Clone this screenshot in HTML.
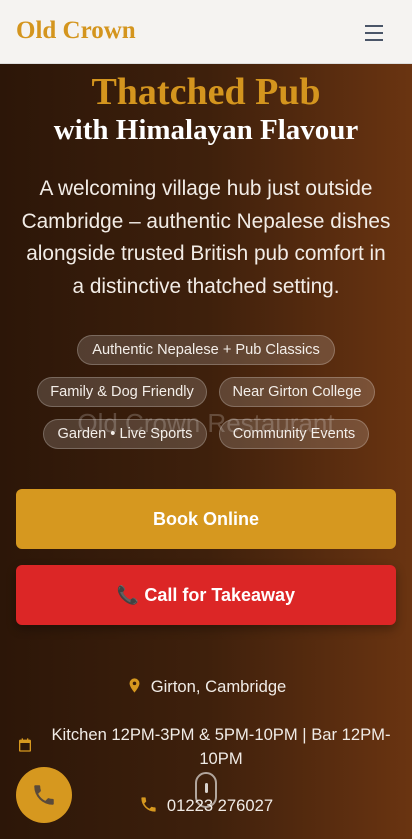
<!DOCTYPE html><html><head><meta charset="utf-8"><style>
*{margin:0;padding:0;box-sizing:border-box}
body{width:412px;height:839px;overflow:hidden;font-family:"Liberation Sans",sans-serif;background:linear-gradient(90deg,#2c1608 0%,#3e200c 50%,#6a3411 100%);position:relative;color:#fff}
.hdr{position:absolute;top:0;left:0;width:412px;height:64px;background:#f5f3f1;border-bottom:1px solid #ddd}
.logo{position:absolute;left:16px;top:17px;font-family:"Liberation Serif",serif;font-weight:bold;font-size:25px;color:#d4951e}
.burger{position:absolute;left:365px;top:25px;width:18px}
.burger i{display:block;height:2px;background:#4a5568;margin-bottom:5px}
.t1{position:absolute;top:70px;width:100%;text-align:center;font-family:"Liberation Serif",serif;font-weight:bold;font-size:38px;color:#d4951e}
.t2{position:absolute;top:114px;width:100%;text-align:center;font-family:"Liberation Serif",serif;font-weight:bold;font-size:29px;color:#fff}
.p{position:absolute;top:173px;left:8px;width:396px;text-align:center;font-size:20.8px;line-height:32.5px;color:#f2ece6}
.tag{position:absolute;height:30px;border-radius:15px;background:rgba(255,255,255,.16);border:1px solid rgba(255,255,255,.22);font-size:14.6px;line-height:28px;text-align:center;color:#f3eee9;white-space:nowrap}
.ghost{position:absolute;top:408px;width:100%;text-align:center;font-size:26px;color:rgba(255,255,255,.2)}
.btn{position:absolute;left:16px;width:380px;height:60px;border-radius:6px;font-weight:bold;font-size:18px;text-align:center;line-height:60px;color:#fff}
.info{position:absolute;width:100%;text-align:center;font-size:16.6px;color:#f0ebe6}
.fab{position:absolute;left:16px;top:767px;width:56px;height:56px;border-radius:50%;background:#d6981f}
</style></head><body>
<div class="hdr"><div class="logo">Old Crown</div><div class="burger"><i></i><i></i><i></i></div></div>
<div class="t1">Thatched Pub</div>
<div class="t2">with Himalayan Flavour</div>
<div class="p">A welcoming village hub just outside<br>Cambridge – authentic Nepalese dishes<br>alongside trusted British pub comfort in<br>a distinctive thatched setting.</div>
<div class="ghost">Old Crown Restaurant</div>
<div class="tag" style="left:77px;top:335px;width:258px">Authentic Nepalese + Pub Classics</div>
<div class="tag" style="left:37px;top:377px;width:170px">Family &amp; Dog Friendly</div>
<div class="tag" style="left:219px;top:377px;width:156px">Near Girton College</div>
<div class="tag" style="left:43px;top:419px;width:164px">Garden • Live Sports</div>
<div class="tag" style="left:219px;top:419px;width:150px">Community Events</div>
<div class="btn" style="top:489px;background:#d6981f">Book Online</div>
<div class="btn" style="top:565px;background:#dc2626;box-shadow:0 4px 10px rgba(0,0,0,.3)">📞 Call for Takeaway</div>
<div class="info" style="top:676px"><svg width="17" height="19" viewBox="0 0 24 24" style="vertical-align:-3px;margin-right:8px"><path fill="#d6981f" d="M12 2a7 7 0 0 0-7 7c0 5 7 13 7 13s7-8 7-13a7 7 0 0 0-7-7zm0 9.5a2.5 2.5 0 1 1 0-5 2.5 2.5 0 0 1 0 5z"/></svg>Girton, Cambridge</div>
<svg width="16" height="16" viewBox="0 0 24 24" style="position:absolute;left:17px;top:737px"><path fill="#d6981f" d="M7 2v2H5a2 2 0 0 0-2 2v14a2 2 0 0 0 2 2h14a2 2 0 0 0 2-2V6a2 2 0 0 0-2-2h-2V2h-2v2H9V2zM5 9h14v11H5z"/></svg>
<div class="info" style="top:723px;left:44px;width:354px;line-height:24px">Kitchen 12PM-3PM &amp; 5PM-10PM | Bar 12PM-10PM</div>
<div class="info" style="top:795px"><svg width="19" height="19" viewBox="0 0 24 24" style="vertical-align:-3px;margin-right:9px"><path fill="#d6981f" d="M6.6 10.8a15 15 0 0 0 6.6 6.6l2.2-2.2c.3-.3.7-.4 1-.2 1.1.4 2.3.6 3.6.6.6 0 1 .4 1 1V20c0 .6-.4 1-1 1A17 17 0 0 1 3 4c0-.6.4-1 1-1h3.5c.6 0 1 .4 1 1 0 1.3.2 2.5.6 3.6.1.3 0 .7-.2 1z"/></svg>01223 276027</div>
<div style="position:absolute;left:195px;top:772px;width:22px;height:36px;border:2px solid rgba(255,255,255,.6);border-radius:11px"><div style="width:3px;height:10px;background:rgba(255,255,255,.8);margin:9px auto 0;border-radius:2px"></div></div>
<div class="fab"><svg width="26" height="26" viewBox="0 0 24 24" style="margin:15px"><path fill="#5a4a3a" d="M6.6 10.8a15 15 0 0 0 6.6 6.6l2.2-2.2c.3-.3.7-.4 1-.2 1.1.4 2.3.6 3.6.6.6 0 1 .4 1 1V20c0 .6-.4 1-1 1A17 17 0 0 1 3 4c0-.6.4-1 1-1h3.5c.6 0 1 .4 1 1 0 1.3.2 2.5.6 3.6.1.3 0 .7-.2 1z"/></svg></div>
</body></html>
